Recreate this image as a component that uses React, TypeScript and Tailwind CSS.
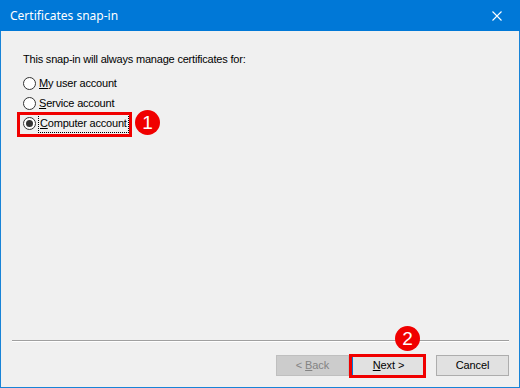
import React from "react";

const font = { fontFamily: '"Liberation Sans", Arial, sans-serif' };

function Radio({ checked }: { checked?: boolean }) {
  return (
    <span className="w-[13px] h-[13px] rounded-full border border-[#333333] bg-white flex items-center justify-center shrink-0">
      {checked && <span className="w-[7px] h-[7px] rounded-full bg-[#333333]" />}
    </span>
  );
}

function Badge({ n, className }: { n: string; className: string }) {
  return (
    <div
      className={`absolute w-[25px] h-[25px] rounded-full bg-[#f00000] text-white flex items-center justify-center text-[19px] leading-none ${className}`}
      style={font}
    >
      {n}
    </div>
  );
}

export default function App() {
  return (
    <div className="relative w-[520px] h-[388px] flex flex-col bg-[#f0f0f0] border border-t-0 border-[#1883d7] text-black" style={font}>
      <div className="h-[31px] -mx-px bg-[#0078d7] flex items-center justify-between shrink-0">
        <span
          className="pl-[10px] text-white text-[12px] leading-none"
          style={{ fontFamily: '"Noto Sans", "Open Sans", sans-serif' }}
        >
          Certificates snap-in
        </span>
        <span className="w-[46px] h-[31px] flex items-center justify-center">
          <svg width="10" height="10" viewBox="0 0 10 10">
            <path d="M0.5 0.5 L9.5 9.5 M9.5 0.5 L0.5 9.5" stroke="white" strokeWidth="1.1" />
          </svg>
        </span>
      </div>

      <div className="flex-1 flex flex-col pt-[22px] pl-[22px] text-[11px] leading-[13px] tracking-[-0.2px]">
        <div>This snap-in will always manage certificates for:</div>
        <div className="mt-[7px] flex flex-col">
          <div className="h-[20px] flex items-center gap-[3px]">
            <Radio />
            <span>
              <span className="underline">M</span>y user account
            </span>
          </div>
          <div className="h-[20px] flex items-center gap-[3px]">
            <Radio />
            <span>
              <span className="underline">S</span>ervice account
            </span>
          </div>
          <div className="h-[21px] flex items-center gap-[2px]">
            <Radio checked />
            <span className="border border-dotted border-black px-px py-[2px]">
              <span className="underline">C</span>omputer account
            </span>
          </div>
        </div>
      </div>

      <div className="ml-[11px] mr-[10px] h-[2px] border-t border-[#a0a0a0] border-b border-b-white shrink-0" />

      <div className="flex justify-end items-center pt-[13px] pb-[11px] pr-[10px] text-[11px] tracking-[-0.1px]">
        <button className="w-[73px] h-[21px] bg-[#cccccc] border border-[#bfbfbf] text-[#838383] leading-none">
          &lt; <span className="underline">B</span>ack
        </button>
        <button className="ml-[3px] w-[73px] h-[21px] bg-[#e1e1e1] border border-[#0078d7] leading-none">
          <span className="underline">N</span>ext &gt;
        </button>
        <button className="ml-[11px] w-[73px] h-[21px] bg-[#e1e1e1] border border-[#adadad] leading-none">
          Cancel
        </button>
      </div>

      <div className="absolute left-[16px] top-[112px] w-[115px] h-[25px] border-[3px] border-[#f00000]" />
      <Badge n="1" className="left-[134px] top-[110px]" />
      <div className="absolute left-[348px] top-[354px] w-[77px] h-[24px] border-[3px] border-[#f00000]" />
      <Badge n="2" className="left-[394px] top-[326px]" />
    </div>
  );
}
